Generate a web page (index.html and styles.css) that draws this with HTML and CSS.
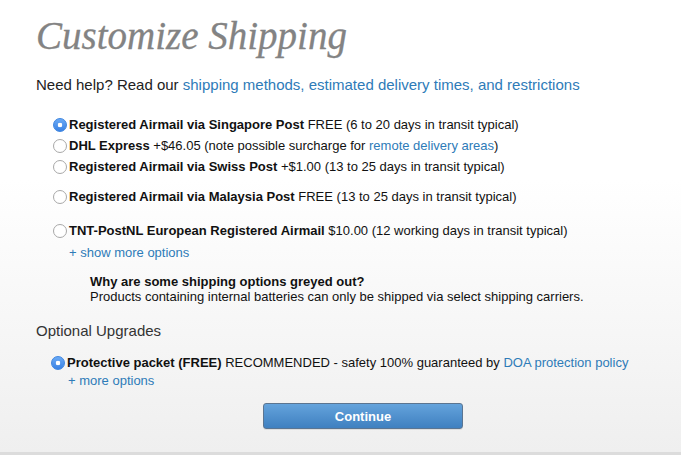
FILE: index.html
```html
<!DOCTYPE html>
<html>
<head>
<meta charset="utf-8">
<link rel="stylesheet" href="styles.css">
</head>
<body>
<div class="page">
  <h1 class="title">Customize Shipping</h1>
  <p class="help">Need help? Read our <a class="link" href="#">shipping methods, estimated delivery times, and restrictions</a></p>

  <div class="options">
    <div class="opt opt-1"><span class="radio on"></span><span><b>Registered Airmail via Singapore Post</b> FREE (6 to 20 days in transit typical)</span></div>
    <div class="opt opt-2"><span class="radio"></span><span><b>DHL Express</b> +$46.05 (note possible surcharge for <a class="link" href="#">remote delivery areas</a>)</span></div>
    <div class="opt opt-3"><span class="radio"></span><span><b>Registered Airmail via Swiss Post</b> +$1.00 (13 to 25 days in transit typical)</span></div>
    <div class="opt opt-4"><span class="radio"></span><span><b>Registered Airmail via Malaysia Post</b> FREE (13 to 25 days in transit typical)</span></div>
    <div class="opt opt-5"><span class="radio"></span><span><b>TNT-PostNL European Registered Airmail</b> $10.00 (12 working days in transit typical)</span></div>
    <a class="more link" href="#">+ show more options</a>
  </div>

  <div class="note">
    <b>Why are some shipping options greyed out?</b><br>
    Products containing internal batteries can only be shipped via select shipping carriers.
  </div>

  <h2 class="sub">Optional Upgrades</h2>
  <div class="upgrade">
    <div class="opt"><span class="radio on"></span><span><b>Protective packet (FREE)</b> RECOMMENDED - safety 100% guaranteed by <a class="link" href="#">DOA protection policy</a></span></div>
    <a class="more more-2 link" href="#">+ more options</a>
  </div>

  <div class="actions">
    <button class="btn">Continue</button>
  </div>
</div>
</body>
</html>
```

FILE: styles.css
```css
html, body {
  margin: 0;
  padding: 0;
}
body {
  width: 681px;
  height: 455px;
  overflow: hidden;
  font-family: "Liberation Sans", Arial, sans-serif;
  color: #111;
  background: linear-gradient(to bottom, #ffffff 0px, #ffffff 180px, #efefef 452px);
  border-bottom: 3px solid #dcdcdc;
  box-sizing: border-box;
}
.page {
  padding: 12px 0 0 36px;
}
.title {
  margin: 0;
  font-family: "Liberation Serif", "Times New Roman", serif;
  font-style: italic;
  font-weight: normal;
  font-size: 39px;
  line-height: 48px;
  color: #838383;
  -webkit-text-stroke: 0.3px #838383;
}
.help {
  margin: 15px 0 0;
  font-size: 15px;
  line-height: 20px;
  color: #222;
}
.link {
  color: #2e7bb8;
  text-decoration: none;
}
.options {
  margin-top: 20px;
  padding-left: 17px;
}
.opt {
  display: flex;
  align-items: center;
  font-size: 13px;
  line-height: 20px;
  color: #111;
}
.opt b { font-weight: bold; }
.opt-2 { margin-top: 1px; }
.opt-3 { margin-top: 1px; }
.opt-4 { margin-top: 10px; }
.opt-5 { margin-top: 14px; }
.radio {
  width: 12px;
  height: 12px;
  border-radius: 50%;
  border: 1px solid #a8a8a8;
  background: #fff;
  margin-right: 2px;
  flex: none;
  box-sizing: content-box;
}
.radio.on {
  border-color: #3d85e0;
  background: radial-gradient(circle, #fff 0 2px, transparent 2.6px), linear-gradient(#6aaaf6, #3a82e4);
}
.more {
  display: block;
  margin-top: 2px;
  font-size: 13px;
  line-height: 20px;
  padding-left: 16px;
}
.note {
  margin: 11px 0 0 54px;
  font-size: 13px;
  line-height: 15px;
  color: #111;
}
.sub {
  margin: 17px 0 0;
  font-weight: normal;
  font-size: 15px;
  line-height: 20px;
  color: #333;
}
.upgrade {
  margin-top: 12px;
  padding-left: 15px;
}
.upgrade .more-2 {
  line-height: 16px;
  margin-top: 0;
  padding-left: 17px;
}
.actions {
  margin-top: 14px;
  padding-left: 227px;
}
.btn {
  display: block;
  width: 200px;
  height: 26px;
  border: 1px solid #5b7591;
  border-radius: 3px;
  background: linear-gradient(#64a3dc, #3f80c0);
  color: #fff;
  font-family: "Liberation Sans", Arial, sans-serif;
  font-weight: bold;
  font-size: 13px;
  padding: 0;
  box-shadow: 0 1px 0 rgba(0,0,0,0.08);
}
```
